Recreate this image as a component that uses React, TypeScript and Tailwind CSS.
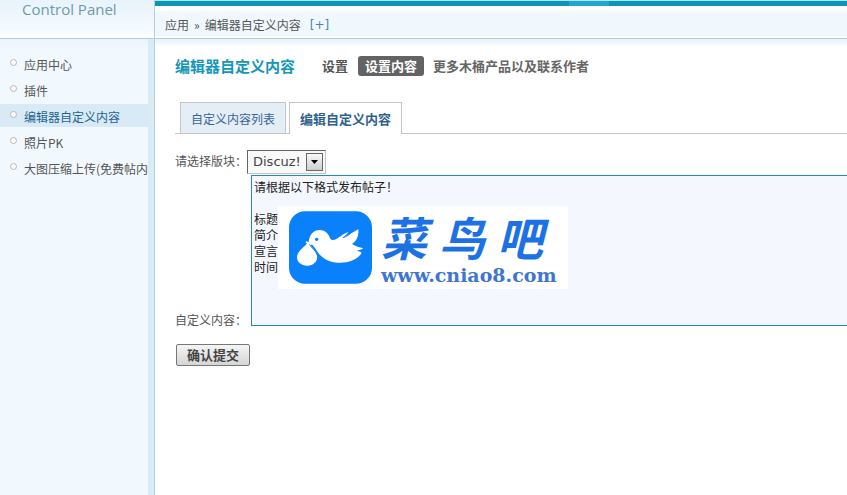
import React from "react";

const menu = ["应用中心", "插件", "编辑器自定义内容", "照片PK", "大图压缩上传(免费帖内"];

function Sidebar() {
  return (
    <aside className="flex w-[155px] shrink-0 flex-col border-r border-[#b5cfdb] bg-[#f1f8fd]">
      <div className="flex h-[39px] shrink-0 items-start border-b border-[#b5cfd6] bg-linear-to-b from-[#e8f3fb] to-[#f8fcff] pl-[22px] shadow-[inset_0_-4px_0_#fff]">
        <span className="font-[Open_Sans] text-[15px] leading-[18px] text-[#7199ad]">Control Panel</span>
      </div>
      <div className="flex grow border-r-6 border-[#d9ecf6] bg-linear-to-b from-[#e9f4fb] to-[#f2f9fe] to-[12px]">
        <nav className="w-full pt-[13px]">
          <ul className="flex flex-col gap-[3px]">
            {menu.map((item, i) => (
              <li key={item} className={i === 2 ? "bg-[#d7eaf6]" : ""}>
                <a
                  href="#"
                  className={
                    "flex h-[23px] items-center gap-[7px] whitespace-nowrap pl-[10px] " +
                    (i === 2 ? "text-[#25638c]" : "text-[#555]")
                  }
                >
                  <span className="mb-[2px] h-[7px] w-[7px] shrink-0 rounded-full border border-[#b9b4b2] bg-white" />
                  <span className="pt-[3px]">{item}</span>
                </a>
              </li>
            ))}
          </ul>
        </nav>
      </div>
    </aside>
  );
}

function Watermark() {
  return (
    <div className="absolute top-[30px] left-[26px] flex h-[83px] w-[290px] items-center bg-white pl-[11px]">
      <svg viewBox="148 211 249 217" className="h-[73px] w-[83px] shrink-0" aria-hidden="true">
        <rect x="148" y="211" width="249" height="217" rx="48" fill="#0a80fb" />
        <path
          d="M207 304 C209 281 221 267 240 267 C258 268 266 279 271 291 C276 302 287 297 299 288 C309 281 316 277 326 273 C321 281 315 286 309 290 C324 283 338 275 356 265 C358 286 350 300 337 309 C349 316 358 319 371 322 C363 327 358 328 352 329 C359 331 363 333 366 335 C356 356 325 366 298 365 C273 366 253 355 238 339 C228 326 222 314 213 307 Z"
          fill="#fff"
        />
        <path d="M310 290 C324 286 334 278 340 267" fill="none" stroke="#0a80fb" strokeWidth="3" />
        <path d="M206 302 C197 317 174 327 172 347 C171 363 186 375 204 374 C222 373 235 360 232 344 C229 328 216 320 206 302 Z" fill="#fff" />
        <path d="M205 304 C214 322 230 327 234 344" fill="none" stroke="#0a80fb" strokeWidth="3" />
        <path d="M201 304 L214 309" stroke="#fff" strokeWidth="6" strokeLinecap="round" />
        <circle cx="231" cy="295" r="5" fill="#0a80fb" />
      </svg>
      <div className="ml-[9px] flex flex-col text-[#1c72e4]">
        <div className="flex gap-[12px] font-['Noto_Sans_CJK_SC',sans-serif] text-[46px] leading-[54px] font-bold italic">
          <span>菜</span>
          <span>鸟</span>
          <span>吧</span>
        </div>
        <span className="font-['DejaVu_Serif',serif] text-[19px] leading-[24px] font-bold text-[#3e75d0]">www.cniao8.com</span>
      </div>
    </div>
  );
}

export default function App() {
  return (
    <div className="flex min-h-screen overflow-hidden bg-white font-['Noto_Sans_CJK_SC',sans-serif] text-[12px] leading-[16px] text-[#555]">
      <Sidebar />
      <div className="flex min-w-0 grow flex-col">
        <div className="flex h-[6px] justify-center border-t border-[#a5efec] bg-[#0f93b9] pl-[176px]">
          <span className="h-[5px] w-[40px] bg-[#25a3d2]" />
        </div>
        <header className="flex h-[33px] items-center border-b border-[#b5cdd1] bg-linear-to-b from-white from-[3px] to-[#f1f8fd] to-[7px] pt-[6px] pl-[10px] shadow-[inset_0_-2px_0_#fff]">
          <a href="#">应用</a>
          <span className="mx-[5px]">»</span>
          <span>编辑器自定义内容</span>
          <a href="#" className="ml-[9px] font-['DejaVu_Sans',sans-serif] text-[#4584ac]">[+]</a>
        </header>
        <main className="grow bg-linear-to-b from-[#e5f2fc] to-white to-[8px] pt-[17px] pl-[20px]">
          <div className="flex h-[20px] items-center text-[13px] font-bold">
            <h1 className="mr-[27px] text-[15px] text-[#1597b8]">编辑器自定义内容</h1>
            <a href="#" className="mr-[10px]">设置</a>
            <a href="#" className="mr-[9px] rounded-[3px] bg-[#636363] px-[7px] leading-[20px] text-white">设置内容</a>
            <a href="#" className="text-[#666]">更多木桶产品以及联系作者</a>
          </div>
          <div className="mt-[26px] flex h-[32px] gap-[3px] border-b border-[#c5c5c5] pl-[5px]">
            <a href="#" className="flex h-[31px] items-center border border-b-0 border-[#bfc6cc] bg-[#e5edf5] px-[10px] pt-[2px] text-[#366595]">自定义内容列表</a>
            <a href="#" className="flex h-[32px] items-center border border-b-0 border-[#c5c5c5] bg-white px-[10px] text-[13px] font-bold text-[#2f618f]">编辑自定义内容</a>
          </div>
          <form className="pt-[16px]">
            <div className="flex h-[25px] items-start">
              <label htmlFor="forum" className="w-[72px] pt-[3px]">请选择版块：</label>
              <div className="relative">
                <select
                  id="forum"
                  className="h-[24px] w-[79px] appearance-none border border-[#c4c4c4] border-t-[#666] border-l-[#666] bg-[#f9f9f9] pl-[5px] font-['DejaVu_Sans',sans-serif] text-[13px] text-[#444]"
                >
                  <option>Discuz!</option>
                </select>
                <span className="pointer-events-none absolute top-[3px] right-[3px] flex h-[18px] w-[17px] items-center justify-center border border-[#666] bg-linear-to-b from-[#f8f8f8] to-[#cfcfcf]">
                  <svg viewBox="0 0 7 4" className="h-[4px] w-[7px]" aria-hidden="true">
                    <path d="M0 0H7L3.5 4Z" fill="#000" />
                  </svg>
                </span>
              </div>
            </div>
            <div className="flex items-end">
              <label htmlFor="content" className="w-[76px] shrink-0 leading-[12px] whitespace-nowrap">自定义内容：</label>
              <div className="relative -mr-[20px] grow border border-[#1f8ea6]">
                <textarea
                  id="content"
                  className="block h-[149px] w-full resize-none border-0 bg-[#f4f8fe] px-[2px] py-[3px] text-[12px] leading-[16px] text-[#222]"
                  defaultValue={"请根据以下格式发布帖子！\n\n标题\n简介\n宣言\n时间"}
                />
                <Watermark />
              </div>
            </div>
            <button
              type="submit"
              className="mt-[18px] ml-[1px] block h-[22px] rounded-[2px] border border-[#777] bg-linear-to-b from-[#f5f5f5] to-[#d5d5d5] px-[10px] text-[13px] leading-[20px] font-bold text-[#444]"
            >
              确认提交
            </button>
          </form>
        </main>
      </div>
    </div>
  );
}
